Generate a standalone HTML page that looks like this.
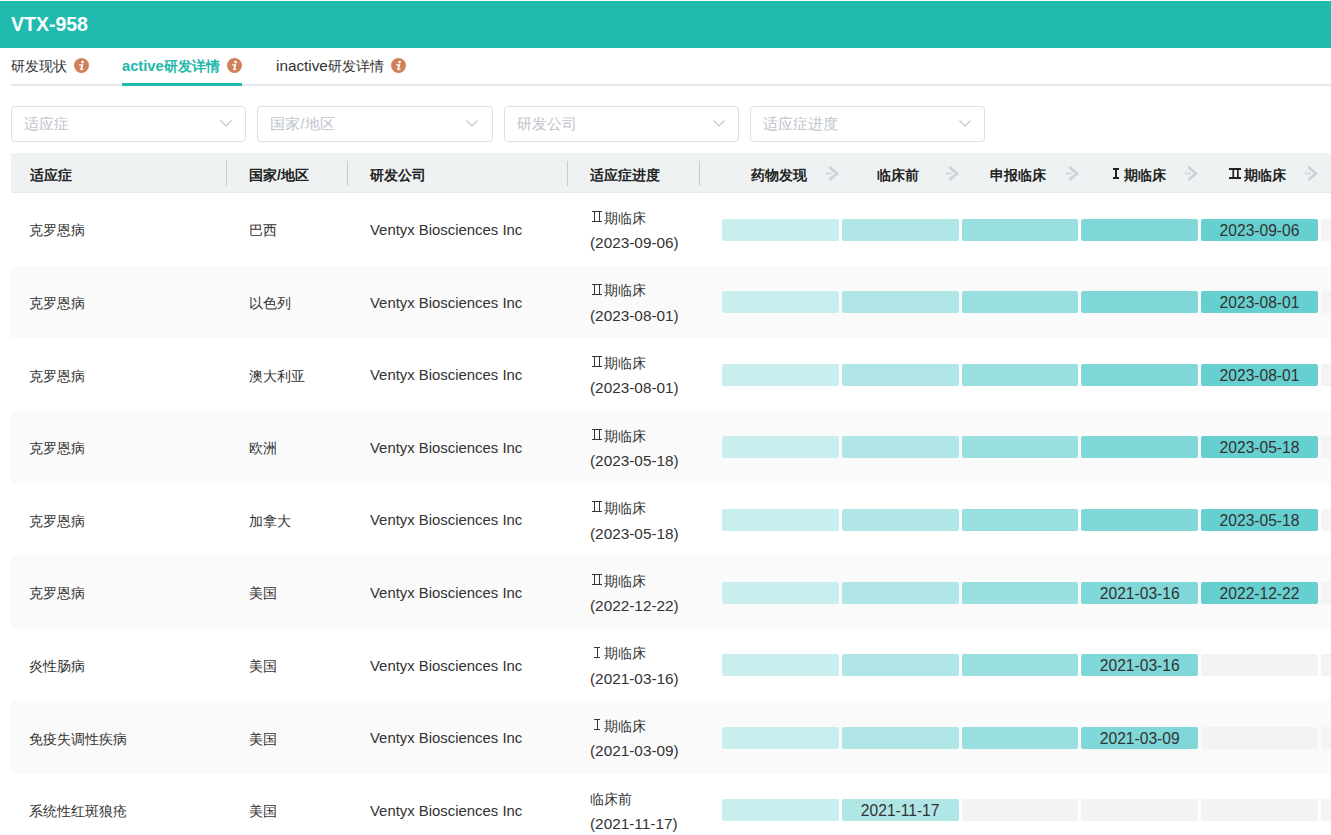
<!DOCTYPE html>
<html><head><meta charset="utf-8"><style>
*{box-sizing:border-box;margin:0;padding:0}
html,body{width:1331px;height:835px;overflow:hidden;background:#fff;font-family:"Liberation Sans",sans-serif;color:#333}
.a{position:absolute;white-space:nowrap}
.hdr{position:absolute;left:0;top:1px;width:1331px;height:47px;background:#20bbae}
.title{position:absolute;left:11px;top:11px;font-size:19.5px;font-weight:bold;color:#fff;line-height:26px}
.tabline{position:absolute;left:11px;top:84px;width:1320px;height:2px;background:#e4e7ed}
.tab{position:absolute;top:56px;font-size:14px;line-height:20px;height:20px;color:#303133;white-space:nowrap}
.tab>.ic{position:absolute;top:2px}.tab svg{display:block}
.act{color:#1fb7aa;font-weight:bold}
.uline{position:absolute;top:83px;height:3px;background:#20bbae}
.sel{position:absolute;top:106px;height:36px;width:235.4px;border:1px solid #dcdfe6;border-radius:4px;background:#fff}
.sel span{position:absolute;left:12px;top:7px;font-size:15.3px;line-height:20px;color:#c0c4cc;white-space:nowrap}
.sel svg{position:absolute;right:13.5px;top:13px}
.thead{position:absolute;left:11px;top:153px;width:1320px;height:40px;background:#eef2f3;border-bottom:1px solid #e8ebf3}
.th{position:absolute;top:166px;font-size:14px;line-height:18px;font-weight:bold;color:#222;white-space:nowrap}
.div{position:absolute;top:161px;width:1px;height:25px;background:#bfd1cf}
.row{position:absolute;left:11px;width:1320px}
.row.g{background:#fafafa}
.td{position:absolute;font-size:14px;line-height:20px;color:#333;white-space:nowrap}
.lat{font-size:14.9px}
.sp{display:inline-block;width:14px}
.bar{position:absolute;height:22px;border-radius:2px;text-align:center;font-size:15.6px;line-height:24px;color:#333}
</style></head><body>

<div class="hdr"></div><div class="title">VTX-958</div>
<div class="tabline"></div>
<div class="tab" style="left:11px">研发现状<span class="ic" style="left:63px"><svg class="ic" width="15" height="15" viewBox="0 0 15 15"><circle cx="7.5" cy="7.5" r="7.5" fill="#d08159"/><circle cx="8.6" cy="4.1" r="1.35" fill="#fff"/><path d="M5.2 6.3 L9.4 6.3 L8.2 10.2 Q8.0 11.0 8.7 10.8 L9.8 10.4 L9.5 11.6 Q8.3 12.4 7.0 12.3 Q5.9 12.1 6.2 11.0 L7.2 7.6 L5.0 7.6 Z" fill="#fff"/></svg></span></div>
<div class="tab act" style="left:122px"><span style="font-size:14.7px">active</span>研发详情<span class="ic" style="left:105px"><svg class="ic" width="15" height="15" viewBox="0 0 15 15"><circle cx="7.5" cy="7.5" r="7.5" fill="#d08159"/><circle cx="8.6" cy="4.1" r="1.35" fill="#fff"/><path d="M5.2 6.3 L9.4 6.3 L8.2 10.2 Q8.0 11.0 8.7 10.8 L9.8 10.4 L9.5 11.6 Q8.3 12.4 7.0 12.3 Q5.9 12.1 6.2 11.0 L7.2 7.6 L5.0 7.6 Z" fill="#fff"/></svg></span></div>
<div class="uline" style="left:122px;width:120px"></div>
<div class="tab" style="left:276px"><span style="font-size:15.3px">inactive</span>研发详情<span class="ic" style="left:114.5px"><svg class="ic" width="15" height="15" viewBox="0 0 15 15"><circle cx="7.5" cy="7.5" r="7.5" fill="#d08159"/><circle cx="8.6" cy="4.1" r="1.35" fill="#fff"/><path d="M5.2 6.3 L9.4 6.3 L8.2 10.2 Q8.0 11.0 8.7 10.8 L9.8 10.4 L9.5 11.6 Q8.3 12.4 7.0 12.3 Q5.9 12.1 6.2 11.0 L7.2 7.6 L5.0 7.6 Z" fill="#fff"/></svg></span></div>
<div class="sel" style="left:11px"><span>适应症</span><svg width="12" height="7" viewBox="0 0 12 7"><path d="M0.5 0.5 L6 6 L11.5 0.5" fill="none" stroke="#c0c4cc" stroke-width="1.1"/></svg></div>
<div class="sel" style="left:257.33px"><span>国家/地区</span><svg width="12" height="7" viewBox="0 0 12 7"><path d="M0.5 0.5 L6 6 L11.5 0.5" fill="none" stroke="#c0c4cc" stroke-width="1.1"/></svg></div>
<div class="sel" style="left:503.67px"><span>研发公司</span><svg width="12" height="7" viewBox="0 0 12 7"><path d="M0.5 0.5 L6 6 L11.5 0.5" fill="none" stroke="#c0c4cc" stroke-width="1.1"/></svg></div>
<div class="sel" style="left:750px"><span>适应症进度</span><svg width="12" height="7" viewBox="0 0 12 7"><path d="M0.5 0.5 L6 6 L11.5 0.5" fill="none" stroke="#c0c4cc" stroke-width="1.1"/></svg></div>
<div class="thead"></div>
<div class="th" style="left:30px">适应症</div>
<div class="th" style="left:249px">国家/地区</div>
<div class="th" style="left:370px">研发公司</div>
<div class="th" style="left:590px">适应症进度</div>
<div class="div" style="left:226px"></div>
<div class="div" style="left:347px"></div>
<div class="div" style="left:567px"></div>
<div class="div" style="left:699px"></div>
<div class="th" style="left:718.6px;width:120px;text-align:center">药物发现</div>
<div class="a" style="left:824.0px;top:165px;line-height:0"><svg width="16" height="16" viewBox="0 0 16 16"><path d="M5.4 1.9 L12.9 8.4 L5.4 14.9" fill="none" stroke="#cdd2da" stroke-width="2.7"/><circle cx="3.1" cy="8.4" r="1.2" fill="#cdd2da"/><circle cx="6.2" cy="8.4" r="1.2" fill="#cdd2da"/></svg></div>
<div class="th" style="left:838.38px;width:120px;text-align:center">临床前</div>
<div class="a" style="left:943.78px;top:165px;line-height:0"><svg width="16" height="16" viewBox="0 0 16 16"><path d="M5.4 1.9 L12.9 8.4 L5.4 14.9" fill="none" stroke="#cdd2da" stroke-width="2.7"/><circle cx="3.1" cy="8.4" r="1.2" fill="#cdd2da"/><circle cx="6.2" cy="8.4" r="1.2" fill="#cdd2da"/></svg></div>
<div class="th" style="left:958.16px;width:120px;text-align:center">申报临床</div>
<div class="a" style="left:1063.56px;top:165px;line-height:0"><svg width="16" height="16" viewBox="0 0 16 16"><path d="M5.4 1.9 L12.9 8.4 L5.4 14.9" fill="none" stroke="#cdd2da" stroke-width="2.7"/><circle cx="3.1" cy="8.4" r="1.2" fill="#cdd2da"/><circle cx="6.2" cy="8.4" r="1.2" fill="#cdd2da"/></svg></div>
<div class="th" style="left:1077.9400000000003px;width:120px;text-align:center"><span class=sp></span>期临床</div>
<div class="a" style="left:1183.3400000000001px;top:165px;line-height:0"><svg width="16" height="16" viewBox="0 0 16 16"><path d="M5.4 1.9 L12.9 8.4 L5.4 14.9" fill="none" stroke="#cdd2da" stroke-width="2.7"/><circle cx="3.1" cy="8.4" r="1.2" fill="#cdd2da"/><circle cx="6.2" cy="8.4" r="1.2" fill="#cdd2da"/></svg></div>
<div class="th" style="left:1197.72px;width:120px;text-align:center"><span class=sp></span>期临床</div>
<div class="a" style="left:1303.12px;top:165px;line-height:0"><svg width="16" height="16" viewBox="0 0 16 16"><path d="M5.4 1.9 L12.9 8.4 L5.4 14.9" fill="none" stroke="#cdd2da" stroke-width="2.7"/><circle cx="3.1" cy="8.4" r="1.2" fill="#cdd2da"/><circle cx="6.2" cy="8.4" r="1.2" fill="#cdd2da"/></svg></div>
<div class="a" style="left:1113px;top:168px;width:6px;height:2px;background:#222"></div>
<div class="a" style="left:1115px;top:168px;width:2px;height:11px;background:#222"></div>
<div class="a" style="left:1113px;top:177px;width:6px;height:2px;background:#222"></div>
<svg class="a" style="left:1229px;top:168px" width="12" height="11" viewBox="0 0 12 11"><rect x="0" y="0" width="12" height="2" fill="#222"/><rect x="0" y="9" width="12" height="2" fill="#222"/><rect x="3.4" y="0" width="1.7" height="11" fill="#222"/><rect x="8.0" y="0" width="1.7" height="11" fill="#222"/></svg>
<div class="row" style="top:193.0px;height:72.6px"></div>
<div class="td" style="left:29px;top:220.30px">克罗恩病</div>
<div class="td" style="left:249px;top:220.30px">巴西</div>
<div class="td lat" style="left:370px;top:219.90px">Ventyx Biosciences Inc</div>
<div class="td" style="left:590px;top:207.80px"><span class="sp"></span>期临床</div>
<div class="a" style="left:591.5px;top:211px;width:10.5px;height:1px;background:#333"></div>
<div class="a" style="left:591.5px;top:221px;width:10.5px;height:1px;background:#333"></div>
<div class="a" style="left:594px;top:211px;width:1px;height:11px;background:#333"></div>
<div class="a" style="left:599px;top:211px;width:1px;height:11px;background:#333"></div>
<div class="td" style="left:590px;top:233.20px;font-size:15.35px">(2023-09-06)</div>
<div class="bar" style="left:722.0px;top:218.50px;width:116.8px;background:#c9eeee"></div>
<div class="bar" style="left:841.78px;top:218.50px;width:116.8px;background:#b0e6e6"></div>
<div class="bar" style="left:961.56px;top:218.50px;width:116.8px;background:#99dfdf"></div>
<div class="bar" style="left:1081.3400000000001px;top:218.50px;width:116.8px;background:#7fd7d7"></div>
<div class="bar" style="left:1201.12px;top:218.50px;width:116.8px;background:#66cfcf">2023-09-06</div>
<div class="bar" style="left:1320.9px;top:218.50px;width:116.8px;background:#f3f3f3"></div>
<div class="row g" style="top:265.6px;height:72.6px"></div>
<div class="td" style="left:29px;top:292.90px">克罗恩病</div>
<div class="td" style="left:249px;top:292.90px">以色列</div>
<div class="td lat" style="left:370px;top:292.50px">Ventyx Biosciences Inc</div>
<div class="td" style="left:590px;top:280.40px"><span class="sp"></span>期临床</div>
<div class="a" style="left:591.5px;top:284px;width:10.5px;height:1px;background:#333"></div>
<div class="a" style="left:591.5px;top:294px;width:10.5px;height:1px;background:#333"></div>
<div class="a" style="left:594px;top:284px;width:1px;height:11px;background:#333"></div>
<div class="a" style="left:599px;top:284px;width:1px;height:11px;background:#333"></div>
<div class="td" style="left:590px;top:305.80px;font-size:15.35px">(2023-08-01)</div>
<div class="bar" style="left:722.0px;top:291.10px;width:116.8px;background:#c9eeee"></div>
<div class="bar" style="left:841.78px;top:291.10px;width:116.8px;background:#b0e6e6"></div>
<div class="bar" style="left:961.56px;top:291.10px;width:116.8px;background:#99dfdf"></div>
<div class="bar" style="left:1081.3400000000001px;top:291.10px;width:116.8px;background:#7fd7d7"></div>
<div class="bar" style="left:1201.12px;top:291.10px;width:116.8px;background:#66cfcf">2023-08-01</div>
<div class="bar" style="left:1320.9px;top:291.10px;width:116.8px;background:#f3f3f3"></div>
<div class="row" style="top:338.2px;height:72.6px"></div>
<div class="td" style="left:29px;top:365.50px">克罗恩病</div>
<div class="td" style="left:249px;top:365.50px">澳大利亚</div>
<div class="td lat" style="left:370px;top:365.10px">Ventyx Biosciences Inc</div>
<div class="td" style="left:590px;top:353.00px"><span class="sp"></span>期临床</div>
<div class="a" style="left:591.5px;top:356px;width:10.5px;height:1px;background:#333"></div>
<div class="a" style="left:591.5px;top:366px;width:10.5px;height:1px;background:#333"></div>
<div class="a" style="left:594px;top:356px;width:1px;height:11px;background:#333"></div>
<div class="a" style="left:599px;top:356px;width:1px;height:11px;background:#333"></div>
<div class="td" style="left:590px;top:378.40px;font-size:15.35px">(2023-08-01)</div>
<div class="bar" style="left:722.0px;top:363.70px;width:116.8px;background:#c9eeee"></div>
<div class="bar" style="left:841.78px;top:363.70px;width:116.8px;background:#b0e6e6"></div>
<div class="bar" style="left:961.56px;top:363.70px;width:116.8px;background:#99dfdf"></div>
<div class="bar" style="left:1081.3400000000001px;top:363.70px;width:116.8px;background:#7fd7d7"></div>
<div class="bar" style="left:1201.12px;top:363.70px;width:116.8px;background:#66cfcf">2023-08-01</div>
<div class="bar" style="left:1320.9px;top:363.70px;width:116.8px;background:#f3f3f3"></div>
<div class="row g" style="top:410.79999999999995px;height:72.6px"></div>
<div class="td" style="left:29px;top:438.10px">克罗恩病</div>
<div class="td" style="left:249px;top:438.10px">欧洲</div>
<div class="td lat" style="left:370px;top:437.70px">Ventyx Biosciences Inc</div>
<div class="td" style="left:590px;top:425.60px"><span class="sp"></span>期临床</div>
<div class="a" style="left:591.5px;top:429px;width:10.5px;height:1px;background:#333"></div>
<div class="a" style="left:591.5px;top:439px;width:10.5px;height:1px;background:#333"></div>
<div class="a" style="left:594px;top:429px;width:1px;height:11px;background:#333"></div>
<div class="a" style="left:599px;top:429px;width:1px;height:11px;background:#333"></div>
<div class="td" style="left:590px;top:451.00px;font-size:15.35px">(2023-05-18)</div>
<div class="bar" style="left:722.0px;top:436.30px;width:116.8px;background:#c9eeee"></div>
<div class="bar" style="left:841.78px;top:436.30px;width:116.8px;background:#b0e6e6"></div>
<div class="bar" style="left:961.56px;top:436.30px;width:116.8px;background:#99dfdf"></div>
<div class="bar" style="left:1081.3400000000001px;top:436.30px;width:116.8px;background:#7fd7d7"></div>
<div class="bar" style="left:1201.12px;top:436.30px;width:116.8px;background:#66cfcf">2023-05-18</div>
<div class="bar" style="left:1320.9px;top:436.30px;width:116.8px;background:#f3f3f3"></div>
<div class="row" style="top:483.4px;height:72.6px"></div>
<div class="td" style="left:29px;top:510.70px">克罗恩病</div>
<div class="td" style="left:249px;top:510.70px">加拿大</div>
<div class="td lat" style="left:370px;top:510.30px">Ventyx Biosciences Inc</div>
<div class="td" style="left:590px;top:498.20px"><span class="sp"></span>期临床</div>
<div class="a" style="left:591.5px;top:501px;width:10.5px;height:1px;background:#333"></div>
<div class="a" style="left:591.5px;top:511px;width:10.5px;height:1px;background:#333"></div>
<div class="a" style="left:594px;top:501px;width:1px;height:11px;background:#333"></div>
<div class="a" style="left:599px;top:501px;width:1px;height:11px;background:#333"></div>
<div class="td" style="left:590px;top:523.60px;font-size:15.35px">(2023-05-18)</div>
<div class="bar" style="left:722.0px;top:508.90px;width:116.8px;background:#c9eeee"></div>
<div class="bar" style="left:841.78px;top:508.90px;width:116.8px;background:#b0e6e6"></div>
<div class="bar" style="left:961.56px;top:508.90px;width:116.8px;background:#99dfdf"></div>
<div class="bar" style="left:1081.3400000000001px;top:508.90px;width:116.8px;background:#7fd7d7"></div>
<div class="bar" style="left:1201.12px;top:508.90px;width:116.8px;background:#66cfcf">2023-05-18</div>
<div class="bar" style="left:1320.9px;top:508.90px;width:116.8px;background:#f3f3f3"></div>
<div class="row g" style="top:556.0px;height:72.6px"></div>
<div class="td" style="left:29px;top:583.30px">克罗恩病</div>
<div class="td" style="left:249px;top:583.30px">美国</div>
<div class="td lat" style="left:370px;top:582.90px">Ventyx Biosciences Inc</div>
<div class="td" style="left:590px;top:570.80px"><span class="sp"></span>期临床</div>
<div class="a" style="left:591.5px;top:574px;width:10.5px;height:1px;background:#333"></div>
<div class="a" style="left:591.5px;top:584px;width:10.5px;height:1px;background:#333"></div>
<div class="a" style="left:594px;top:574px;width:1px;height:11px;background:#333"></div>
<div class="a" style="left:599px;top:574px;width:1px;height:11px;background:#333"></div>
<div class="td" style="left:590px;top:596.20px;font-size:15.35px">(2022-12-22)</div>
<div class="bar" style="left:722.0px;top:581.50px;width:116.8px;background:#c9eeee"></div>
<div class="bar" style="left:841.78px;top:581.50px;width:116.8px;background:#b0e6e6"></div>
<div class="bar" style="left:961.56px;top:581.50px;width:116.8px;background:#99dfdf"></div>
<div class="bar" style="left:1081.3400000000001px;top:581.50px;width:116.8px;background:#7fd7d7">2021-03-16</div>
<div class="bar" style="left:1201.12px;top:581.50px;width:116.8px;background:#66cfcf">2022-12-22</div>
<div class="bar" style="left:1320.9px;top:581.50px;width:116.8px;background:#f3f3f3"></div>
<div class="row" style="top:628.5999999999999px;height:72.6px"></div>
<div class="td" style="left:29px;top:655.90px">炎性肠病</div>
<div class="td" style="left:249px;top:655.90px">美国</div>
<div class="td lat" style="left:370px;top:655.50px">Ventyx Biosciences Inc</div>
<div class="td" style="left:590px;top:643.40px"><span class="sp"></span>期临床</div>
<div class="a" style="left:594px;top:647px;width:6px;height:1px;background:#333"></div>
<div class="a" style="left:594px;top:657px;width:6px;height:1px;background:#333"></div>
<div class="a" style="left:597px;top:647px;width:1px;height:11px;background:#333"></div>
<div class="td" style="left:590px;top:668.80px;font-size:15.35px">(2021-03-16)</div>
<div class="bar" style="left:722.0px;top:654.10px;width:116.8px;background:#c9eeee"></div>
<div class="bar" style="left:841.78px;top:654.10px;width:116.8px;background:#b0e6e6"></div>
<div class="bar" style="left:961.56px;top:654.10px;width:116.8px;background:#99dfdf"></div>
<div class="bar" style="left:1081.3400000000001px;top:654.10px;width:116.8px;background:#7fd7d7">2021-03-16</div>
<div class="bar" style="left:1201.12px;top:654.10px;width:116.8px;background:#f3f3f3"></div>
<div class="bar" style="left:1320.9px;top:654.10px;width:116.8px;background:#f3f3f3"></div>
<div class="row g" style="top:701.1999999999999px;height:72.6px"></div>
<div class="td" style="left:29px;top:728.50px">免疫失调性疾病</div>
<div class="td" style="left:249px;top:728.50px">美国</div>
<div class="td lat" style="left:370px;top:728.10px">Ventyx Biosciences Inc</div>
<div class="td" style="left:590px;top:716.00px"><span class="sp"></span>期临床</div>
<div class="a" style="left:594px;top:719px;width:6px;height:1px;background:#333"></div>
<div class="a" style="left:594px;top:729px;width:6px;height:1px;background:#333"></div>
<div class="a" style="left:597px;top:719px;width:1px;height:11px;background:#333"></div>
<div class="td" style="left:590px;top:741.40px;font-size:15.35px">(2021-03-09)</div>
<div class="bar" style="left:722.0px;top:726.70px;width:116.8px;background:#c9eeee"></div>
<div class="bar" style="left:841.78px;top:726.70px;width:116.8px;background:#b0e6e6"></div>
<div class="bar" style="left:961.56px;top:726.70px;width:116.8px;background:#99dfdf"></div>
<div class="bar" style="left:1081.3400000000001px;top:726.70px;width:116.8px;background:#7fd7d7">2021-03-09</div>
<div class="bar" style="left:1201.12px;top:726.70px;width:116.8px;background:#f3f3f3"></div>
<div class="bar" style="left:1320.9px;top:726.70px;width:116.8px;background:#f3f3f3"></div>
<div class="row" style="top:773.8px;height:72.6px"></div>
<div class="td" style="left:29px;top:801.10px">系统性红斑狼疮</div>
<div class="td" style="left:249px;top:801.10px">美国</div>
<div class="td lat" style="left:370px;top:800.70px">Ventyx Biosciences Inc</div>
<div class="td" style="left:590px;top:788.60px">临床前</div>
<div class="td" style="left:590px;top:814.00px;font-size:15.35px">(2021-11-17)</div>
<div class="bar" style="left:722.0px;top:799.30px;width:116.8px;background:#c9eeee"></div>
<div class="bar" style="left:841.78px;top:799.30px;width:116.8px;background:#b0e6e6">2021-11-17</div>
<div class="bar" style="left:961.56px;top:799.30px;width:116.8px;background:#f3f3f3"></div>
<div class="bar" style="left:1081.3400000000001px;top:799.30px;width:116.8px;background:#f3f3f3"></div>
<div class="bar" style="left:1201.12px;top:799.30px;width:116.8px;background:#f3f3f3"></div>
<div class="bar" style="left:1320.9px;top:799.30px;width:116.8px;background:#f3f3f3"></div>
</body></html>
